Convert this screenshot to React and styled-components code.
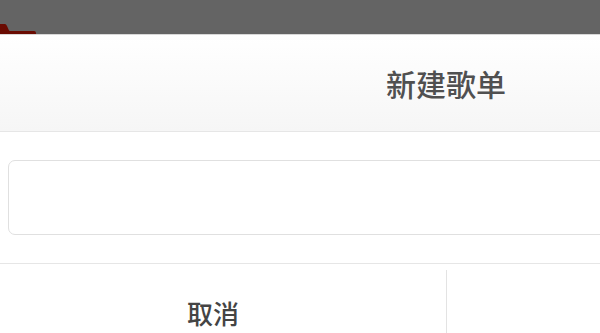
import styled, { createGlobalStyle } from 'styled-components';

const GlobalStyle = createGlobalStyle`
  html, body {
    margin: 0;
    padding: 0;
    width: 600px;
    height: 333px;
    overflow: hidden;
    background: #ffffff;
    font-family: "Noto Sans CJK SC", "Noto Sans", sans-serif;
  }
`;

// 背景遮罩 (对话框上面的灰色区域)
const Overlay = styled.div`
  position: relative;
  height: 34px;
  background-color: #646464;
`;

// 遮罩下露出的红色标签
const PeekTab = styled.svg`
  position: absolute;
  left: 0;
  bottom: 0;
`;

// 对话框
const Dialog = styled.div`
  width: 932px;
  margin-left: -20px;
  background-color: #ffffff;
  border-top: 1px solid #d8d8d8;
`;

const Header = styled.div`
  display: flex;
  justify-content: center;
  align-items: center;
  height: 96px;
  background: linear-gradient(#ffffff, #f6f6f6);
  border-bottom: 1px solid #e6e6e6;
`;

const Title = styled.h1`
  margin: 0;
  font-size: 30px;
  font-weight: 500;
  color: #505050;
`;

const Body = styled.div`
  padding: 28px 28px 28px;
`;

const NameInput = styled.input`
  display: block;
  box-sizing: border-box;
  width: 100%;
  height: 75px;
  padding: 0 16px;
  border: 1px solid #e0e0e0;
  border-radius: 7px;
  outline: none;
  font-family: inherit;
  font-size: 26px;
  color: #333333;
  background: #ffffff;
`;

const Footer = styled.div`
  display: flex;
  border-top: 1px solid #e6e6e6;
`;

const ActionButton = styled.button`
  position: relative;
  flex: 1;
  height: 96px;
  padding: 0;
  border: none;
  background: #ffffff;
  font-family: inherit;
  font-size: 26px;
  font-weight: 500;
  color: #444444;

  ${props => props.divided && `
    &::before {
      content: '';
      position: absolute;
      left: 0;
      top: 6px;
      bottom: 0;
      width: 1px;
      background: #e3e3e3;
    }
  `}
`;

const App = () => {
  return (
    <>
      <GlobalStyle />
      <Overlay>
        <PeekTab width="40" height="10" viewBox="0 0 40 10">
          <path d="M0 0 L5 0 Q6 0 7 2 L9 6.5 Q9.5 7 11 7 L34 7 Q36 7 36 9 L36 10 L0 10 Z" fill="#6a0b02" />
        </PeekTab>
      </Overlay>
      <Dialog>
        <Header>
          <Title>新建歌单</Title>
        </Header>
        <Body>
          <NameInput type="text" />
        </Body>
        <Footer>
          <ActionButton>取消</ActionButton>
          {/* 确定按钮的文字在画面右边之外 */}
          <ActionButton divided aria-label="确定" />
        </Footer>
      </Dialog>
    </>
  );
};

export default App;
